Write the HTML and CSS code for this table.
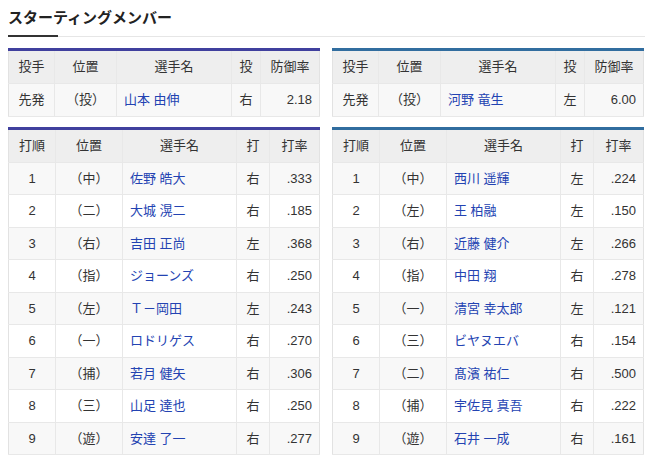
FILE: index.html
```html
<!DOCTYPE html>
<html lang="ja">
<head>
<meta charset="utf-8">
<title>スターティングメンバー</title>
<link rel="stylesheet" href="styles.css">
</head>
<body>
<div class="page">
  <h2 class="title">スターティングメンバー</h2>
  <div class="rule"><span class="rule-dark"></span><span class="rule-light"></span></div>

  <div class="teams">
    <div class="team team-home">
      <table class="lineup pitcher">
        <colgroup><col class="c1"><col class="c2"><col class="c3"><col class="c4"><col class="c5"></colgroup>
        <thead><tr><th>投手</th><th>位置</th><th>選手名</th><th>投</th><th>防御率</th></tr></thead>
        <tbody>
          <tr><td class="ctr">先発</td><td class="ctr">（投）</td><td class="name"><a>山本 由伸</a></td><td class="ctr">右</td><td class="num">2.18</td></tr>
        </tbody>
      </table>
      <table class="lineup batters">
        <colgroup><col class="b1"><col class="b2"><col class="b3"><col class="b4"><col class="b5"></colgroup>
        <thead><tr><th>打順</th><th>位置</th><th>選手名</th><th>打</th><th>打率</th></tr></thead>
        <tbody>
          <tr><td class="ctr">1</td><td class="ctr">（中）</td><td class="name"><a>佐野 皓大</a></td><td class="ctr">右</td><td class="num">.333</td></tr>
          <tr><td class="ctr">2</td><td class="ctr">（二）</td><td class="name"><a>大城 滉二</a></td><td class="ctr">右</td><td class="num">.185</td></tr>
          <tr><td class="ctr">3</td><td class="ctr">（右）</td><td class="name"><a>吉田 正尚</a></td><td class="ctr">左</td><td class="num">.368</td></tr>
          <tr><td class="ctr">4</td><td class="ctr">（指）</td><td class="name"><a>ジョーンズ</a></td><td class="ctr">右</td><td class="num">.250</td></tr>
          <tr><td class="ctr">5</td><td class="ctr">（左）</td><td class="name"><a>Ｔ－岡田</a></td><td class="ctr">左</td><td class="num">.243</td></tr>
          <tr><td class="ctr">6</td><td class="ctr">（一）</td><td class="name"><a>ロドリゲス</a></td><td class="ctr">右</td><td class="num">.270</td></tr>
          <tr><td class="ctr">7</td><td class="ctr">（捕）</td><td class="name"><a>若月 健矢</a></td><td class="ctr">右</td><td class="num">.306</td></tr>
          <tr><td class="ctr">8</td><td class="ctr">（三）</td><td class="name"><a>山足 達也</a></td><td class="ctr">右</td><td class="num">.250</td></tr>
          <tr><td class="ctr">9</td><td class="ctr">（遊）</td><td class="name"><a>安達 了一</a></td><td class="ctr">右</td><td class="num">.277</td></tr>
        </tbody>
      </table>
    </div>

    <div class="team team-away">
      <table class="lineup pitcher">
        <colgroup><col class="c1"><col class="c2"><col class="c3"><col class="c4"><col class="c5"></colgroup>
        <thead><tr><th>投手</th><th>位置</th><th>選手名</th><th>投</th><th>防御率</th></tr></thead>
        <tbody>
          <tr><td class="ctr">先発</td><td class="ctr">（投）</td><td class="name"><a>河野 竜生</a></td><td class="ctr">左</td><td class="num">6.00</td></tr>
        </tbody>
      </table>
      <table class="lineup batters">
        <colgroup><col class="b1"><col class="b2"><col class="b3"><col class="b4"><col class="b5"></colgroup>
        <thead><tr><th>打順</th><th>位置</th><th>選手名</th><th>打</th><th>打率</th></tr></thead>
        <tbody>
          <tr><td class="ctr">1</td><td class="ctr">（中）</td><td class="name"><a>西川 遥輝</a></td><td class="ctr">左</td><td class="num">.224</td></tr>
          <tr><td class="ctr">2</td><td class="ctr">（左）</td><td class="name"><a>王 柏融</a></td><td class="ctr">左</td><td class="num">.150</td></tr>
          <tr><td class="ctr">3</td><td class="ctr">（右）</td><td class="name"><a>近藤 健介</a></td><td class="ctr">左</td><td class="num">.266</td></tr>
          <tr><td class="ctr">4</td><td class="ctr">（指）</td><td class="name"><a>中田 翔</a></td><td class="ctr">右</td><td class="num">.278</td></tr>
          <tr><td class="ctr">5</td><td class="ctr">（一）</td><td class="name"><a>清宮 幸太郎</a></td><td class="ctr">左</td><td class="num">.121</td></tr>
          <tr><td class="ctr">6</td><td class="ctr">（三）</td><td class="name"><a>ビヤヌエバ</a></td><td class="ctr">右</td><td class="num">.154</td></tr>
          <tr><td class="ctr">7</td><td class="ctr">（二）</td><td class="name"><a>髙濱 祐仁</a></td><td class="ctr">右</td><td class="num">.500</td></tr>
          <tr><td class="ctr">8</td><td class="ctr">（捕）</td><td class="name"><a>宇佐見 真吾</a></td><td class="ctr">右</td><td class="num">.222</td></tr>
          <tr><td class="ctr">9</td><td class="ctr">（遊）</td><td class="name"><a>石井 一成</a></td><td class="ctr">右</td><td class="num">.161</td></tr>
        </tbody>
      </table>
    </div>
  </div>
</div>
</body>
</html>
```

FILE: styles.css
```css
html, body {
  margin: 0;
  padding: 0;
  background: #fff;
}
body {
  font-family: "Liberation Sans", "Noto Sans CJK JP", sans-serif;
  color: #333;
  font-size: 13px;
}
.page {
  padding: 0 5px 0 8px;
}
.title {
  margin: 0;
  padding-top: 7px;
  font-size: 15px;
  line-height: 22px;
  font-weight: bold;
  color: #222;
  height: 28px;
}
.rule {
  display: flex;
  align-items: center;
  height: 2px;
}
.rule-dark {
  width: 50px;
  height: 2px;
  background: #333;
}
.rule-light {
  flex: 1;
  height: 1px;
  background: #e6e6e6;
}
.teams {
  display: grid;
  grid-template-columns: 311px 312px;
  column-gap: 13px;
  margin-top: 11px;
}
.team {
  display: flex;
  flex-direction: column;
  gap: 10px;
}
.lineup {
  width: 100%;
  table-layout: fixed;
  border-collapse: collapse;
  border: 1px solid #e2e2e2;
}
.team-home .lineup { border-top: 3px solid #40409e; }
.team-away .lineup { border-top: 3px solid #316d9f; }
.c1 { width: 46px; }
.c2 { width: 62px; }
.c3 { width: 115px; }
.c4 { width: 29px; }
.c5 { width: 59px; }
.b1 { width: 47px; }
.b2 { width: 67px; }
.b3 { width: 114px; }
.b4 { width: 33px; }
.b5 { width: 50px; }
.lineup th, .lineup td {
  border: 1px solid #e8e8e8;
  padding: 6px 7px;
  line-height: 19px;
  white-space: nowrap;
}
.lineup tr > :first-child { border-left-color: #e2e2e2; }
.lineup tr > :last-child { border-right-color: #e2e2e2; }
.lineup th {
  background: #eeeeee;
  font-weight: normal;
  text-align: center;
  color: #333;
  padding-left: 2px;
  padding-right: 2px;
  line-height: 20px;
}
.lineup td { line-height: 19.5px; }
.lineup tbody tr:nth-child(odd) td { background: #f8f8f8; }
.lineup tbody tr:nth-child(even) td { background: #fff; }
.ctr { text-align: center; }
.num { text-align: right; }
.name { text-align: left; }
.name a {
  color: #2343b2;
  text-decoration: none;
}
```
